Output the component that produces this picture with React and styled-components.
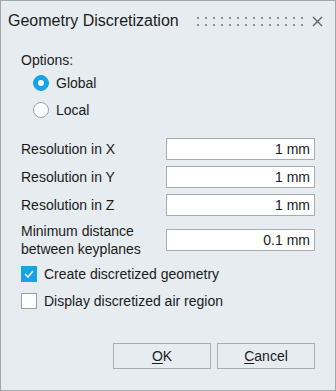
import React from "react";
import styled, { createGlobalStyle } from "styled-components";

const Global = createGlobalStyle`
  html, body {
    margin: 0;
    padding: 0;
    background: #e6ecef;
  }
  * {
    box-sizing: border-box;
  }
`;

const Window = styled.div`
  width: 336px;
  height: 391px;
  border: 1px solid #a2a7ab;
  background: #e6ecef;
  font-family: "Liberation Sans", Arial, sans-serif;
  color: #1b1b1b;
  display: flex;
  flex-direction: column;
`;

const TitleBar = styled.div`
  display: flex;
  align-items: center;
  height: 40px;
  padding: 0 12px 0 7px;
`;

const Title = styled.div`
  font-size: 16px;
`;

const Grip = styled.div`
  display: grid;
  grid-template-columns: repeat(14, 2px);
  column-gap: 6px;
  row-gap: 5px;
  margin-left: 18px;
  margin-top: 1px;
`;

const Dot = styled.span`
  width: 2px;
  height: 2px;
  background: #8e9296;
`;

const Close = styled.button`
  margin-left: auto;
  border: 0;
  padding: 0;
  background: none;
  width: 12px;
  height: 12px;
  display: flex;
  align-items: center;
  justify-content: center;
`;

const Body = styled.div`
  flex: 1;
  display: flex;
  flex-direction: column;
  padding: 11px 20px 0 20px;
  font-size: 14px;
`;

const Label = styled.div`
  line-height: 16px;
`;

const RadioGroup = styled.div`
  display: flex;
  flex-direction: column;
  gap: 11px;
  margin: 7px 0 0 12px;
`;

const Option = styled.label`
  display: flex;
  align-items: center;
  gap: 7px;
  line-height: 16px;
`;

const Radio = styled.span`
  width: 16px;
  height: 16px;
  border-radius: 50%;
  display: flex;
  align-items: center;
  justify-content: center;
  background: ${(p) => (p.$on ? "#18a3e6" : "#ffffff")};
  border: 1px solid ${(p) => (p.$on ? "#18a3e6" : "#9b9fa3")};
  &::after {
    content: "";
    display: ${(p) => (p.$on ? "block" : "none")};
    width: 6px;
    height: 6px;
    border-radius: 50%;
    background: #ffffff;
  }
`;

const Fields = styled.div`
  display: flex;
  flex-direction: column;
  gap: 6px;
  margin-top: 20px;
`;

const FieldRow = styled.div`
  display: flex;
  align-items: center;
  justify-content: space-between;
  min-height: 22px;
`;

const FieldLabel = styled.div`
  line-height: 18px;
`;

const Input = styled.div`
  width: 149px;
  height: 22px;
  background: #ffffff;
  border: 1px solid #a8acb0;
  text-align: right;
  padding: 0 4px;
  line-height: 20px;
`;

const Checks = styled.div`
  display: flex;
  flex-direction: column;
  gap: 11px;
  margin-top: 8px;
`;

const Box = styled.span`
  width: 16px;
  height: 16px;
  display: flex;
  align-items: center;
  justify-content: center;
  background: ${(p) => (p.$on ? "#18a3e6" : "#ffffff")};
  border: 1px solid ${(p) => (p.$on ? "#18a3e6" : "#9b9fa3")};
`;

const Buttons = styled.div`
  margin-top: auto;
  margin-bottom: 21px;
  display: flex;
  justify-content: flex-end;
  gap: 6px;
`;

const Button = styled.button`
  width: ${(p) => p.$w}px;
  height: 26px;
  background: #e6ecef;
  border: 1px solid #a8adb1;
  font-family: inherit;
  font-size: 14px;
  color: #1b1b1b;
  padding: 0;
  u {
    text-decoration-thickness: 1px;
    text-underline-offset: 2px;
  }
`;

const fields = [
  { label: "Resolution in X", value: "1 mm" },
  { label: "Resolution in Y", value: "1 mm" },
  { label: "Resolution in Z", value: "1 mm" },
  { label: ["Minimum distance", "between keyplanes"], value: "0.1 mm" },
];

export default function App() {
  return (
    <>
      <Global />
      <Window>
        <TitleBar>
          <Title>Geometry Discretization</Title>
          <Grip>
            {Array.from({ length: 28 }).map((_, i) => (
              <Dot key={i} />
            ))}
          </Grip>
          <Close aria-label="Close">
            <svg width="11" height="11" viewBox="0 0 11 11">
              <path d="M1 1 L10 10 M10 1 L1 10" stroke="#5f6367" strokeWidth="1.4" />
            </svg>
          </Close>
        </TitleBar>
        <Body>
          <Label>Options:</Label>
          <RadioGroup>
            <Option>
              <Radio $on />
              Global
            </Option>
            <Option>
              <Radio />
              Local
            </Option>
          </RadioGroup>
          <Fields>
            {fields.map((f, i) => (
              <FieldRow key={i}>
                <FieldLabel>
                  {Array.isArray(f.label)
                    ? f.label.map((l) => <div key={l}>{l}</div>)
                    : f.label}
                </FieldLabel>
                <Input>{f.value}</Input>
              </FieldRow>
            ))}
          </Fields>
          <Checks>
            <Option>
              <Box $on>
                <svg width="10" height="8" viewBox="0 0 10 8">
                  <path d="M1 4 L4 7 L9 1" fill="none" stroke="#ffffff" strokeWidth="1.5" />
                </svg>
              </Box>
              Create discretized geometry
            </Option>
            <Option>
              <Box />
              Display discretized air region
            </Option>
          </Checks>
          <Buttons>
            <Button $w={98}>
              <u>O</u>K
            </Button>
            <Button $w={98}>
              <u>C</u>ancel
            </Button>
          </Buttons>
        </Body>
      </Window>
    </>
  );
}
